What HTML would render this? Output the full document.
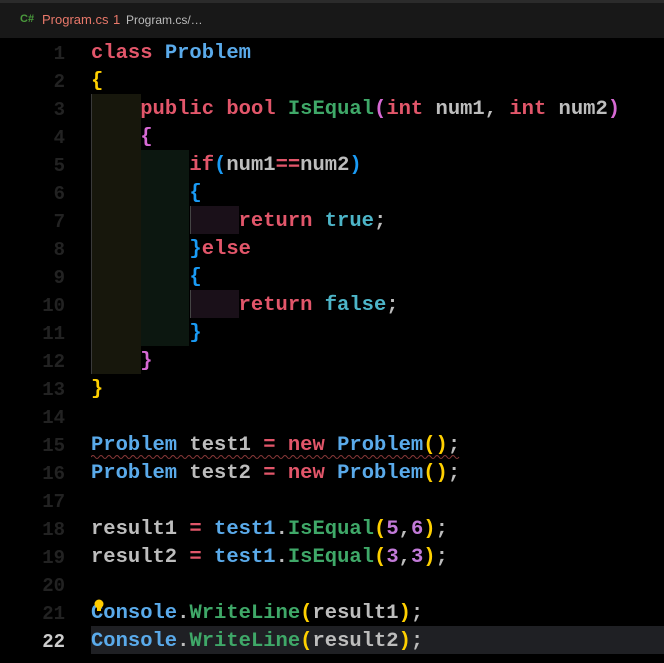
<!DOCTYPE html>
<html><head><style>
body{margin:0;width:664px;height:663px;background:#000;overflow:hidden;position:relative;font-family:"Liberation Mono",monospace;}
.top{position:absolute;left:0;top:0;width:664px;height:3px;background:#2b2b2b}
.tab{position:absolute;left:0;top:3px;width:664px;height:35px;background:#181818;font-family:"Liberation Sans",sans-serif;font-size:13px}
.tab span{position:absolute;top:9px}
.blk{position:absolute}
.ln{position:absolute;left:0;width:65px;text-align:right;color:#222;font-size:19px;font-weight:bold;line-height:28px}
.code{position:absolute;left:91px;font-size:20.5px;font-weight:bold;line-height:28px;white-space:pre;color:#bdbdbd}
.k{color:#e2566a}.c{color:#5aaaea}.m{color:#3fa868}.y{color:#ffd000}.p{color:#d769d4}.b{color:#1a9bf5}.n{color:#c27ad8}.t{color:#4db5c8}
</style></head><body>
<div class="top"></div>
<div class="tab"><span style="left:20px;color:#4a9a3c;font-weight:bold;font-size:11px;top:10px">C#</span><span style="left:42px;color:#e8786a">Program.cs</span><span style="left:113px;color:#e8786a">1</span><span style="left:126px;color:#bbb;font-size:12px;top:10px">Program.cs/…</span></div>
<div class="blk" style="left:91px;top:94px;width:49px;height:280px;background:#17170c;border-left:1px solid #3a3a3a"></div>
<div class="blk" style="left:141px;top:150px;width:48px;height:196px;background:#0c1710"></div>
<div class="blk" style="left:190px;top:206px;width:48px;height:28px;background:#1a1019;border-left:1px solid #444"></div>
<div class="blk" style="left:190px;top:290px;width:48px;height:28px;background:#1a1019;border-left:1px solid #444"></div>
<div class="blk" style="left:91px;top:626px;width:573px;height:28px;background:#1f2024"></div>
<div class="ln" style="top:40px">1<br>2<br>3<br>4<br>5<br>6<br>7<br>8<br>9<br>10<br>11<br>12<br>13<br>14<br>15<br>16<br>17<br>18<br>19<br>20<br>21<br><span style="color:#ccc">22</span></div>
<div class="code" style="top:40px"><span class="k">class</span> <span class="c">Problem</span>
<span class="y">{</span>
    <span class="k">public</span> <span class="k">bool</span> <span class="m">IsEqual</span><span class="p">(</span><span class="k">int</span> num1, <span class="k">int</span> num2<span class="p">)</span>
    <span class="p">{</span>
        <span class="k">if</span><span class="b">(</span>num1<span class="k">==</span>num2<span class="b">)</span>
        <span class="b">{</span>
            <span class="k">return</span> <span class="t">true</span>;
        <span class="b">}</span><span class="k">else</span>
        <span class="b">{</span>
            <span class="k">return</span> <span class="t">false</span>;
        <span class="b">}</span>
    <span class="p">}</span>
<span class="y">}</span>

<span class="c">Problem</span> test1 <span class="k">=</span> <span class="k">new</span> <span class="c">Problem</span><span class="y">()</span>;
<span class="c">Problem</span> test2 <span class="k">=</span> <span class="k">new</span> <span class="c">Problem</span><span class="y">()</span>;

result1 <span class="k">=</span> <span class="c">test1</span>.<span class="m">IsEqual</span><span class="y">(</span><span class="n">5</span>,<span class="n">6</span><span class="y">)</span>;
result2 <span class="k">=</span> <span class="c">test1</span>.<span class="m">IsEqual</span><span class="y">(</span><span class="n">3</span>,<span class="n">3</span><span class="y">)</span>;

<span class="c">Console</span>.<span class="m">WriteLine</span><span class="y">(</span>result1<span class="y">)</span>;
<span class="c">Console</span>.<span class="m">WriteLine</span><span class="y">(</span>result2<span class="y">)</span>;</div>
<svg style="position:absolute;left:91px;top:454px" width="370" height="5"><path d="M0 3 Q2 0 4 3 T8 3 T12 3 T16 3 T20 3 T24 3 T28 3 T32 3 T36 3 T40 3 T44 3 T48 3 T52 3 T56 3 T60 3 T64 3 T68 3 T72 3 T76 3 T80 3 T84 3 T88 3 T92 3 T96 3 T100 3 T104 3 T108 3 T112 3 T116 3 T120 3 T124 3 T128 3 T132 3 T136 3 T140 3 T144 3 T148 3 T152 3 T156 3 T160 3 T164 3 T168 3 T172 3 T176 3 T180 3 T184 3 T188 3 T192 3 T196 3 T200 3 T204 3 T208 3 T212 3 T216 3 T220 3 T224 3 T228 3 T232 3 T236 3 T240 3 T244 3 T248 3 T252 3 T256 3 T260 3 T264 3 T268 3 T272 3 T276 3 T280 3 T284 3 T288 3 T292 3 T296 3 T300 3 T304 3 T308 3 T312 3 T316 3 T320 3 T324 3 T328 3 T332 3 T336 3 T340 3 T344 3 T348 3 T352 3 T356 3 T360 3 T364 3 T368 3" stroke="#8a3a3a" fill="none" stroke-width="1"/></svg>
<svg style="position:absolute;left:93px;top:599px" width="12" height="14"><circle cx="6" cy="5" r="4.5" fill="#ffcc00"/><rect x="4" y="9" width="4" height="3" fill="#ffcc00"/></svg>
</body></html>
